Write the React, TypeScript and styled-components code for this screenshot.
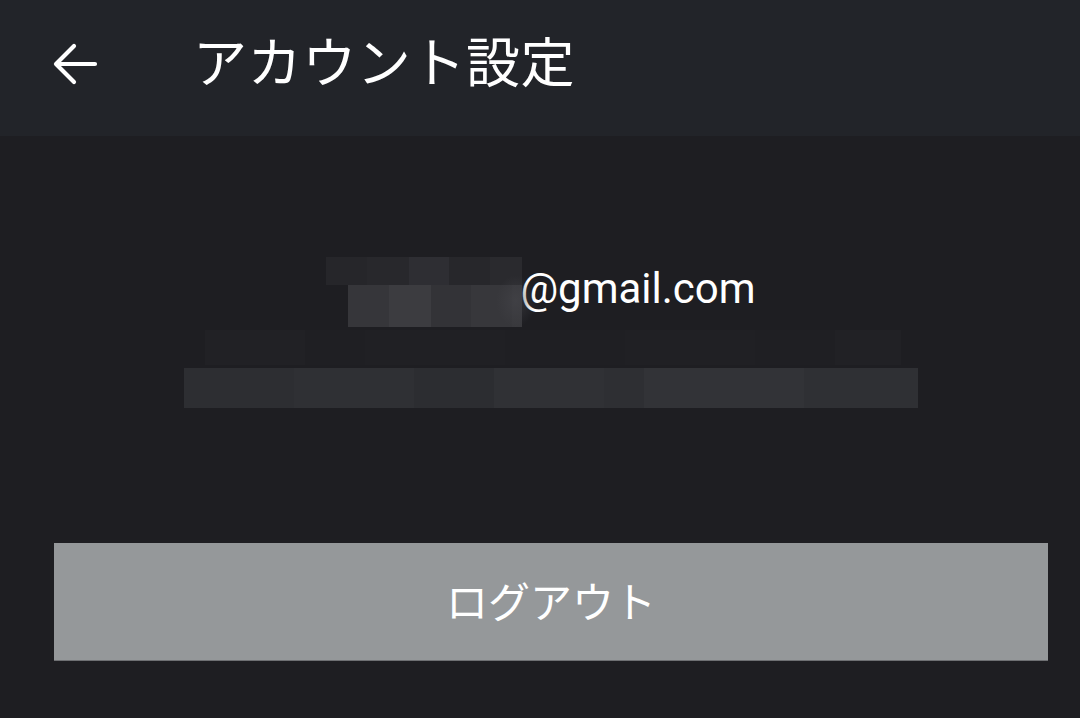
import React from "react";
import styled, { createGlobalStyle } from "styled-components";

const Global = createGlobalStyle`
  html, body { margin: 0; padding: 0; background: #1e1e22; }
  body { font-family: Roboto, "Noto Sans CJK JP", sans-serif; }
  #root { min-height: 718px; }
`;

const Page = styled.div`
  width: 1080px;
  height: 718px;
  background: #1e1e22;
  display: flex;
  flex-direction: column;
  overflow: hidden;
`;

const Header = styled.header`
  height: 136px;
  background: #222429;
  display: flex;
  align-items: center;
  padding-left: 51px;
  box-sizing: border-box;
  flex-shrink: 0;
`;

const BackButton = styled.button`
  width: 48px;
  height: 48px;
  padding: 0;
  border: none;
  background: transparent;
  display: flex;
  align-items: center;
  justify-content: center;
  margin-top: -9px;
`;

const Title = styled.h1`
  margin: -16px 0 0 94px;
  font-family: "Noto Sans CJK JP", sans-serif;
  font-weight: 400;
  font-size: 54px;
  line-height: 1;
  color: #ffffff;
  letter-spacing: 0.6px;
`;

const Content = styled.main`
  display: flex;
  flex-direction: column;
  align-items: stretch;
  padding-top: 121px;
`;

const EmailRow = styled.div`
  display: flex;
  justify-content: center;
  align-items: center;
  padding-left: 2px;
`;

const Mosaic = styled.div`
  display: flex;
  flex-direction: column;
  width: 196px;
  height: 70px;
  position: relative;
`;

const MosaicRow = styled.div<{ $h: number; $indent: number }>`
  display: flex;
  height: ${(p) => p.$h}px;
  margin-left: ${(p) => p.$indent}px;
`;

const Tile = styled.div<{ $c: string; $w: number }>`
  width: ${(p) => p.$w}px;
  height: 100%;
  background: ${(p) => p.$c};
  flex-shrink: 0;
`;

const Fade = styled.div`
  position: absolute;
  right: -14px;
  top: 18px;
  width: 40px;
  height: 52px;
  background: radial-gradient(ellipse at center, rgba(70,70,75,0.55), rgba(30,30,34,0) 70%);
`;

const EmailText = styled.span`
  font-family: Roboto, sans-serif;
  font-size: 42px;
  color: #ffffff;
  line-height: 1;
  margin-top: -6px;
  margin-left: -2px;
`;

const IdBlock = styled.div`
  display: flex;
  flex-direction: column;
  margin-left: 184px;
  margin-top: 3px;
  width: 734px;
`;

const IdFaint = styled.div`
  display: flex;
  height: 35px;
  margin-left: 21px;
  width: 696px;
`;

const IdBar = styled.div`
  display: flex;
  height: 40px;
  margin-top: 3px;
`;

const LogoutButton = styled.button`
  margin: 135px 32px 0 54px;
  height: 118px;
  border: none;
  border-bottom: 1px solid #6e7073;
  background: #95989a;
  color: #ffffff;
  font-family: "Noto Sans CJK JP", sans-serif;
  font-size: 42px;
  font-weight: 400;
  display: flex;
  align-items: center;
  justify-content: center;
  padding: 0 0 4px 0;
  box-sizing: border-box;
`;

const row1 = [
  ["#26262a", 41],
  ["#28282c", 42],
  ["#2e2e33", 40],
  ["#27272b", 41],
  ["#2a2a2e", 32],
] as const;

const row2 = [
  ["#36363a", 41],
  ["#3c3c40", 42],
  ["#333337", 40],
  ["#37373b", 41],
  ["#39393d", 10],
] as const;

const faint = [
  ["#212125", 100],
  ["#1f1f23", 60],
  ["#202024", 140],
  ["#1f1f23", 120],
  ["#202024", 130],
  ["#1f1f23", 80],
  ["#212125", 66],
] as const;

const bar = [
  ["#2d2e32", 110],
  ["#2f3034", 120],
  ["#2c2d31", 80],
  ["#303135", 110],
  ["#2e2f33", 40],
  ["#323337", 160],
  ["#2f3034", 114],
] as const;

const ArrowIcon = () => (
  <svg width="48" height="48" viewBox="0 0 48 48" fill="none">
    <path
      d="M44 24H6M23 6L5 24l18 18"
      stroke="#ffffff"
      strokeWidth="4.2"
      strokeLinecap="round"
      strokeLinejoin="round"
    />
  </svg>
);

export default function App() {
  return (
    <Page>
      <Global />
      <Header>
        <BackButton aria-label="戻る">
          <ArrowIcon />
        </BackButton>
        <Title>アカウント設定</Title>
      </Header>
      <Content>
        <EmailRow>
          <Mosaic>
            <MosaicRow $h={28} $indent={0}>
              {row1.map(([c, w], i) => (
                <Tile key={i} $c={c} $w={w} />
              ))}
            </MosaicRow>
            <MosaicRow $h={42} $indent={22}>
              {row2.map(([c, w], i) => (
                <Tile key={i} $c={c} $w={w} />
              ))}
            </MosaicRow>
            <Fade />
          </Mosaic>
          <EmailText>@gmail.com</EmailText>
        </EmailRow>
        <IdBlock>
          <IdFaint>
            {faint.map(([c, w], i) => (
              <Tile key={i} $c={c} $w={w} />
            ))}
          </IdFaint>
          <IdBar>
            {bar.map(([c, w], i) => (
              <Tile key={i} $c={c} $w={w} />
            ))}
          </IdBar>
        </IdBlock>
        <LogoutButton>ログアウト</LogoutButton>
      </Content>
    </Page>
  );
}
